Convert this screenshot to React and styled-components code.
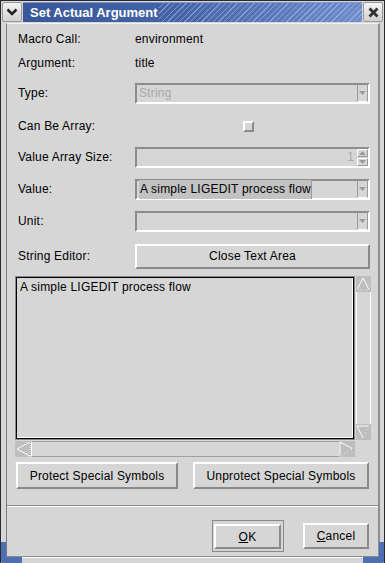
import React from 'react'
import styled, { createGlobalStyle } from 'styled-components'

const GlobalStyle = createGlobalStyle`
  html, body {
    margin: 0;
    padding: 0;
    background: #d6d6d6;
  }
  body {
    font-family: "Liberation Sans", Arial, Helvetica, sans-serif;
    font-size: 12px;
    letter-spacing: 0.2px;
    color: #000;
  }
`

const Window = styled.div`
  position: relative;
  width: 385px;
  height: 563px;
  box-sizing: border-box;
  background: #d6d6d6;
  border-left: 1px solid #2a2a2a;
  border-top: 1px solid #2a2a2a;
  border-right: 1px solid #2a2a2a;
  display: flex;
  flex-direction: column;
  overflow: hidden;
`

const TitleBar = styled.div`
  display: flex;
  height: 20px;
  margin: 1px 1px 0 1px;
  gap: 1px;
`

const FrameButton = styled.div`
  width: 20px;
  flex: none;
  box-sizing: border-box;
  border: 1px solid #9a9a9a;
  border-radius: 2px;
  background: linear-gradient(#f4f4f4, #d0d0d0);
  display: flex;
  align-items: center;
  justify-content: center;
`

const Caption = styled.div`
  position: relative;
  flex: 1;
  display: flex;
  align-items: center;
  padding-left: 7px;
  color: #fff;
  font-weight: bold;
  font-size: 13px;
  letter-spacing: 0;
  background: linear-gradient(to right, #3a5898 0%, #4463a6 45%, #6f8ccc 100%);
  border-top: 1px solid #7d96cc;
  box-sizing: border-box;
  &::after {
    content: '';
    position: absolute;
    left: 136px;
    right: 0;
    top: 0;
    bottom: 0;
    background: repeating-linear-gradient(
      135deg,
      transparent 0px,
      transparent 3px,
      rgba(190, 210, 245, 0.45) 3px,
      rgba(190, 210, 245, 0.45) 4px
    );
  }
  span {
    position: relative;
    z-index: 1;
  }
`

const Client = styled.div`
  flex: 1;
  margin: 1px 4px 0 5px;
  border-left: 1px solid #7c7c7c;
  border-right: 2px solid #8c8c8c;
  border-bottom: 1px solid #8c8c8c;
  border-top: 1px solid #f2f2f2;
  display: flex;
  flex-direction: column;
`

const FormArea = styled.div`
  padding: 3px 8px 0 8px;
  display: flex;
  flex-direction: column;
`

const Row = styled.div`
  display: flex;
  align-items: center;
  height: ${p => p.$h}px;
  padding-left: 3px;
`

const Label = styled.div`
  width: 117px;
  flex: none;
`

const Field = styled.div`
  flex: 1;
  display: flex;
  align-items: center;
  justify-content: ${p => (p.$center ? 'center' : 'flex-start')};
`

const Sunken = styled.div`
  flex: 1;
  height: 21px;
  box-sizing: border-box;
  display: flex;
  align-items: center;
  border-top: 2px solid #8c8c8c;
  border-left: 2px solid #8c8c8c;
  border-bottom: 2px solid #fff;
  border-right: 2px solid #fff;
  padding-left: 2px;
  color: ${p => (p.$disabled ? '#a8a8a8' : '#000')};
`

const ComboText = styled.div`
  flex: 1;
  white-space: nowrap;
  overflow: hidden;
`

const Selected = styled.span`
  display: inline-block;
  background: #c2c2c2;
  outline: 1px solid #9c9c9c;
  padding: 2px 0 3px 1px;
  line-height: 14px;
`

const ArrowBox = styled.div`
  width: 11px;
  height: 17px;
  flex: none;
  box-sizing: border-box;
  border-left: 1px solid #9a9a9a;
  border-right: 1px solid #9a9a9a;
  border-bottom: 1px solid #fff;
  display: flex;
  align-items: center;
  justify-content: center;
`

const SpinText = styled.div`
  flex: 1;
  text-align: right;
  padding-right: 3px;
  color: #a8a8a8;
`

const SpinButtons = styled.div`
  width: 11px;
  height: 17px;
  flex: none;
  display: flex;
  flex-direction: column;
  gap: 1px;
`

const SpinButton = styled.div`
  flex: 1;
  box-sizing: border-box;
  border-top: 1px solid #fff;
  border-left: 1px solid #fff;
  border-right: 1px solid #9a9a9a;
  border-bottom: 1px solid #9a9a9a;
  display: flex;
  align-items: center;
  justify-content: center;
`

const CheckBox = styled.div`
  width: 11px;
  height: 11px;
  box-sizing: border-box;
  margin-left: -8px;
  border-top: 2px solid #fff;
  border-left: 2px solid #fff;
  border-right: 2px solid #8a8a8a;
  border-bottom: 2px solid #8a8a8a;
`

const Button = styled.button`
  height: ${p => p.$h || 25}px;
  width: ${p => (p.$w ? `${p.$w}px` : 'auto')};
  flex: ${p => (p.$w ? 'none' : 1)};
  box-sizing: border-box;
  background: #d6d6d6;
  border-top: 2px solid #fff;
  border-left: 2px solid #fff;
  border-right: 2px solid #8a8a8a;
  border-bottom: 2px solid #8a8a8a;
  font-family: "Liberation Sans", Arial, Helvetica, sans-serif;
  font-size: 12px;
  letter-spacing: 0.2px;
  color: #000;
  padding: 0;
  margin: 0;
  u {
    text-decoration: underline;
  }
`

const Editor = styled.div`
  margin-top: 1px;
  display: grid;
  grid-template-columns: 340px 16px;
  grid-template-rows: 164px 17px;
`

const TextBox = styled.div`
  box-sizing: border-box;
  border: 2px solid #000;
  box-shadow: inset -1px -1px 0 #fff;
  padding: 2px 3px;
  line-height: 14px;
  outline: 1px solid #8a8a8a;
  outline-offset: -1px;
`

const VScroll = styled.div`
  margin-left: 1px;
  display: flex;
  flex-direction: column;
`

const HScroll = styled.div`
  margin-top: 1px;
  display: flex;
`

const Track = styled.div`
  flex: 1;
  box-sizing: border-box;
  ${p =>
    p.$vertical
      ? 'border-left: 1px solid #fff; border-right: 1px solid #fff;'
      : 'border-top: 1px solid #a0a0a0; border-bottom: 1px solid #a0a0a0; border-left: 1px solid #fff;'}
`

const ScrollArrowBox = styled.div`
  width: ${p => (p.$vertical ? '15px' : '16px')};
  height: 16px;
  flex: none;
  background: #bebebe;
  display: flex;
`

const ButtonRow = styled.div`
  display: flex;
  justify-content: space-between;
  margin-top: 5px;
  padding: 0 1px;
`

const Spacer = styled.div`
  flex: 1;
`

const Separator = styled.div`
  height: 1px;
  background: #8c8c8c;
  border-bottom: 1px solid #fff;
`

const Footer = styled.div`
  display: flex;
  justify-content: flex-end;
  align-items: center;
  gap: 19px;
  padding: 13px 9px 4px 0;
`

const DefaultFrame = styled.div`
  border: 1px solid #8a8a8a;
  padding: 3px 2px 2px 1px;
  display: flex;
`

const BottomFrame = styled.div`
  height: 6px;
  border-top: 1px solid #fff;
  background: #d6d6d6;
  box-sizing: border-box;
`

const Corner = styled.div`
  position: absolute;
  bottom: 0;
  ${p => (p.$right ? 'right: -1px;' : 'left: -1px;')}
  width: 22px;
  height: 21px;
  box-sizing: border-box;
  border-bottom: 6px solid #4f6fb5;
  ${p => (p.$right ? 'border-right: 6px solid #4f6fb5;' : 'border-left: 6px solid #4f6fb5;')}
  border-radius: ${p => (p.$right ? '0 0 4px 0' : '0 0 0 4px')};
`

const Tri = ({ dir, color = '#9a9a9a' }) => {
  const pts = dir === 'up' ? '0,5 3.5,1 7,5' : '0,1 3.5,5 7,1'
  return (
    <svg width="7" height="6" viewBox="0 0 7 6">
      <polygon points={pts} fill={color} />
    </svg>
  )
}

const arrowShapes = {
  up: [[7.5, 2], [14, 14], [1, 14]],
  down: [[1, 2], [14, 2], [7.5, 14]],
  left: [[2, 8], [15, 1], [15, 15]],
  right: [[1, 1], [14, 8], [1, 15]],
}

const ScrollArrow = ({ dir }) => {
  const p = arrowShapes[dir]
  return (
    <svg width="100%" height="100%" viewBox="0 0 16 16" preserveAspectRatio="none">
      <polygon points={p.map(q => q.join(',')).join(' ')} fill="#bebebe" stroke="#fff" strokeWidth="1" />
      <line
        x1={p[1][0]}
        y1={p[1][1]}
        x2={p[2][0]}
        y2={p[2][1]}
        stroke="#7e7e7e"
        strokeWidth="1"
        strokeDasharray="1 1"
      />
    </svg>
  )
}

const App = () => {
  return (
    <>
      <GlobalStyle />
      <Window>
        <TitleBar>
          <FrameButton>
            <svg width="12" height="8" viewBox="0 0 12 8">
              <polyline points="1.5,1.5 6,6 10.5,1.5" fill="none" stroke="#222" strokeWidth="2.6" />
            </svg>
          </FrameButton>
          <Caption>
            <span>Set Actual Argument</span>
          </Caption>
          <FrameButton>
            <svg width="11" height="11" viewBox="0 0 11 11">
              <line x1="1.5" y1="1.5" x2="9.5" y2="9.5" stroke="#333" strokeWidth="2.8" />
              <line x1="9.5" y1="1.5" x2="1.5" y2="9.5" stroke="#333" strokeWidth="2.8" />
            </svg>
          </FrameButton>
        </TitleBar>

        <Client>
          <FormArea>
            <Row $h={24}>
              <Label>Macro Call:</Label>
              <Field>environment</Field>
            </Row>
            <Row $h={24}>
              <Label>Argument:</Label>
              <Field>title</Field>
            </Row>
            <Row $h={36}>
              <Label>Type:</Label>
              <Field>
                <Sunken $disabled>
                  <ComboText>String</ComboText>
                  <ArrowBox>
                    <Tri dir="down" />
                  </ArrowBox>
                </Sunken>
              </Field>
            </Row>
            <Row $h={30}>
              <Label>Can Be Array:</Label>
              <Field $center>
                <CheckBox />
              </Field>
            </Row>
            <Row $h={32}>
              <Label>Value Array Size:</Label>
              <Field>
                <Sunken $disabled>
                  <SpinText>1</SpinText>
                  <SpinButtons>
                    <SpinButton>
                      <Tri dir="up" />
                    </SpinButton>
                    <SpinButton>
                      <Tri dir="down" />
                    </SpinButton>
                  </SpinButtons>
                </Sunken>
              </Field>
            </Row>
            <Row $h={32}>
              <Label>Value:</Label>
              <Field>
                <Sunken>
                  <ComboText>
                    <Selected>A simple LIGEDIT process flow</Selected>
                  </ComboText>
                  <ArrowBox>
                    <Tri dir="down" />
                  </ArrowBox>
                </Sunken>
              </Field>
            </Row>
            <Row $h={32}>
              <Label>Unit:</Label>
              <Field>
                <Sunken $disabled>
                  <ComboText />
                  <ArrowBox>
                    <Tri dir="down" />
                  </ArrowBox>
                </Sunken>
              </Field>
            </Row>
            <Row $h={38}>
              <Label>String Editor:</Label>
              <Field>
                <Button>Close Text Area</Button>
              </Field>
            </Row>

            <Editor>
              <TextBox>A simple LIGEDIT process flow</TextBox>
              <VScroll>
                <ScrollArrowBox $vertical>
                  <ScrollArrow dir="up" />
                </ScrollArrowBox>
                <Track $vertical />
                <ScrollArrowBox $vertical>
                  <ScrollArrow dir="down" />
                </ScrollArrowBox>
              </VScroll>
              <HScroll>
                <ScrollArrowBox>
                  <ScrollArrow dir="left" />
                </ScrollArrowBox>
                <Track />
                <ScrollArrowBox>
                  <ScrollArrow dir="right" />
                </ScrollArrowBox>
              </HScroll>
              <div />
            </Editor>

            <ButtonRow>
              <Button $w={162} $h={27}>
                Protect Special Symbols
              </Button>
              <Button $w={176} $h={27}>
                Unprotect Special Symbols
              </Button>
            </ButtonRow>
          </FormArea>

          <Spacer />
          <Separator />
          <Footer>
            <DefaultFrame>
              <Button $w={67} $h={25}>
                <u>O</u>K
              </Button>
            </DefaultFrame>
            <Button $w={66} $h={26}>
              <u>C</u>ancel
            </Button>
          </Footer>
        </Client>
        <BottomFrame />
        <Corner />
        <Corner $right />
      </Window>
    </>
  )
}

export default App
